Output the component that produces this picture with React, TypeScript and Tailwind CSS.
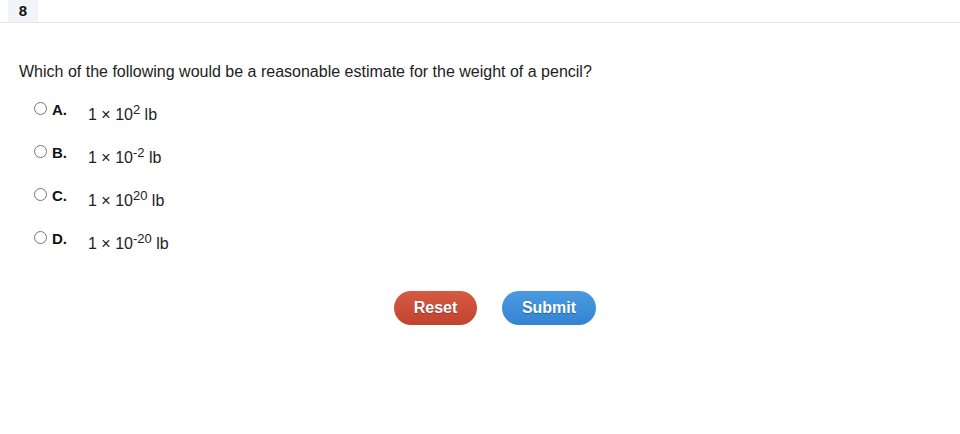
import React from "react";

const options = [
  { l: "A.", exp: "2" },
  { l: "B.", exp: "-2" },
  { l: "C.", exp: "20" },
  { l: "D.", exp: "-20" },
];

export default function App() {
  return (
    <div className="w-[960px] h-[434px] bg-white" style={{ fontFamily: '"Liberation Sans", Arial, sans-serif' }}>
      <div className="h-[23px] border-b border-[#e6e6e6] flex">
        <div className="ml-[8px] w-[30px] h-[22px] bg-[#f1f4f8] flex items-center justify-center text-[15px] font-bold text-[#111]">8</div>
      </div>
      <div className="pl-[19px] pt-[40px] text-[16px] text-[#222] leading-[18px]">
        Which of the following would be a reasonable estimate for the weight of a pencil?
      </div>
      <div className="pl-[34px] pt-[21px] flex flex-col gap-[25px]">
        {options.map((o) => (
          <div key={o.l} className="flex items-start h-[18px]">
            <div className="w-[13px] h-[13px] mt-[0px] rounded-full border border-[#767676] bg-white" />
            <div className="ml-[5px] w-[36px] text-[15px] font-bold text-[#111] leading-[15px]">{o.l}</div>
            <div className="mt-[4px] text-[16px] text-[#222] leading-[18px]">
              1 × 10<sup className="text-[13px] relative -top-[6px]">{o.exp}</sup> lb
            </div>
          </div>
        ))}
      </div>
      <div className="flex justify-center gap-[25px] pl-[30px] pt-[42px]">
        <button className="w-[83px] h-[34px] rounded-full bg-gradient-to-b from-[#d65a43] to-[#c0432e] text-white font-bold text-[16px] [text-shadow:0_1px_1px_rgba(0,0,0,0.3)]">Reset</button>
        <button className="w-[94px] h-[34px] rounded-full bg-gradient-to-b from-[#4a9be2] to-[#3383d0] text-white font-bold text-[16px] [text-shadow:0_1px_1px_rgba(0,0,0,0.3)]">Submit</button>
      </div>
    </div>
  );
}
